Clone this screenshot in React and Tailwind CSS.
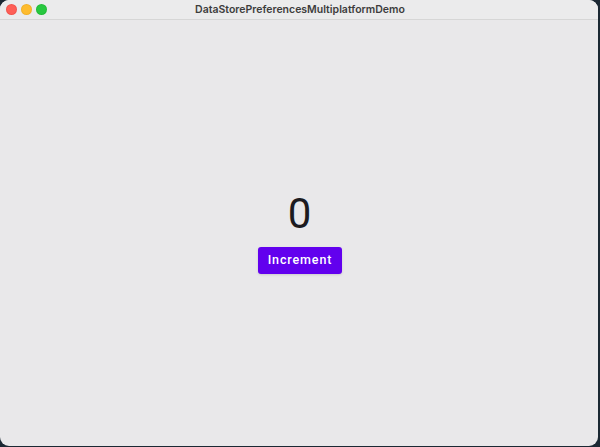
import React, { useState } from "react";

const App = () => {
  const [count, setCount] = useState(0);

  return (
    <div className="w-[600px] h-[447px] bg-[#1b2833] font-['Inter','Noto_Sans',sans-serif]">
      <div className="w-[598px] h-[446px] rounded-[9px] overflow-hidden flex flex-col bg-[#e9e8ea]">
        <div className="h-[20px] shrink-0 bg-[#ebebec] border-b border-[#d6d6d6] flex items-center relative">
          <div className="flex gap-[4px] pl-[6px]">
            <span className="w-[11px] h-[11px] rounded-full bg-[#fe5f57] border border-[#e0443e]/40" />
            <span className="w-[11px] h-[11px] rounded-full bg-[#febc2e] border border-[#dea123]/40" />
            <span className="w-[11px] h-[11px] rounded-full bg-[#28c840] border border-[#1aab29]/40" />
          </div>
          <div className="absolute inset-0 flex items-center justify-center text-[10.5px] font-semibold text-[#3d3d3d] pl-[2px]">
            DataStorePreferencesMultiplatformDemo
          </div>
        </div>
        <div className="flex-1 flex flex-col items-center justify-center font-['Roboto',sans-serif]">
          <div className="text-[42px] leading-[42px] text-[#1c1b1f] mt-[1px] pl-[1px]">{count}</div>
          <button
            onClick={() => setCount(count + 1)}
            className="mt-[12px] ml-[2px] w-[84px] h-[27px] rounded-[3px] bg-[#6200ee] text-white text-[12.5px] font-medium tracking-[0.07em] shadow-sm"
          >
            Increment
          </button>
        </div>
      </div>
    </div>
  );
};

export default App;
